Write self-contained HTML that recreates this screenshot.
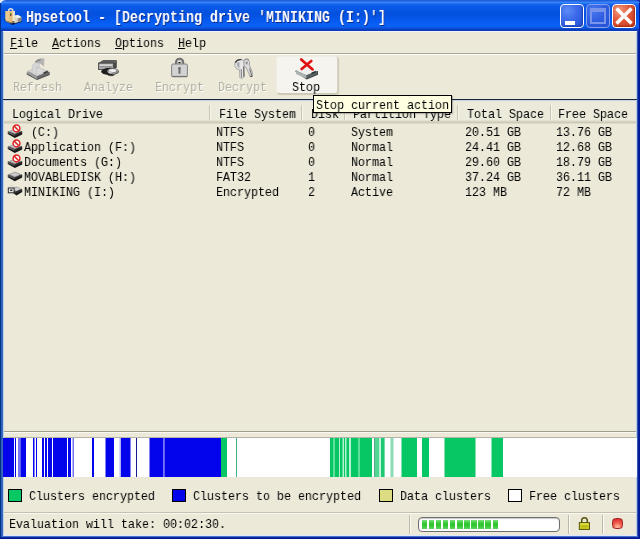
<!DOCTYPE html>
<html>
<head>
<meta charset="utf-8">
<title>Hpsetool</title>
<style>
html,body{margin:0;padding:0;}
body{width:640px;height:539px;overflow:hidden;background:#ece9d8;position:relative;font-family:"Liberation Mono",monospace;}
.abs{position:absolute;}
/* 7px-per-char text imitating 14px SimSun */
.t{position:absolute;font-family:"Liberation Mono",monospace;font-size:13px;line-height:15px;height:15px;white-space:pre;color:#000;transform:scaleX(.8973);transform-origin:0 0;will-change:transform;}
.dis{color:#b2af9f;text-shadow:1px 1px 0 #fff;}
u{text-decoration:underline;text-decoration-thickness:1px;text-underline-offset:1px;}
/* window frame */
#title{left:0;top:0;width:640px;height:31px;border-radius:6px 5px 0 0;
 background:linear-gradient(180deg,#1a58d2 0,#2466e0 1px,#3884fa 2.5px,#1866ee 4px,#0a5ae8 6.5px,#0450de 14px,#065af0 21px,#0a62f6 26px,#0a56e0 28px,#0a40c0 29.5px,#0a38b2 31px);}
#ttext{position:absolute;left:25.5px;top:8px;font-family:"Liberation Mono",monospace;font-weight:bold;font-size:16px;line-height:20px;color:#fff;white-space:pre;transform:scaleX(.8331);transform-origin:0 0;will-change:transform;text-shadow:1px 1px 0 #0a2a8c;}
.bl{background:#0a35c8;}
</style>
</head>
<body>
<!-- corners behind the rounded title bar -->
<div class="abs" style="left:0;top:0;width:320px;height:10px;background:#e4ecfa;"></div><div class="abs" style="left:320px;top:0;width:320px;height:10px;background:#0a30b4;"></div>
<div id="title" class="abs"></div>
<svg class="abs" style="left:0;top:0;" width="30" height="30" viewBox="0 0 30 30">
<path d="M4.3 20.3 L12.3 25 L21.8 21.8 L21.8 19 L4.3 19Z" fill="#061848"/>
<path d="M14 15.8 L18 15 L21.3 17 L21.3 21 L15 23.2 L14 22Z" fill="#d8d4cc"/>
<path d="M14.5 15.8 L18 15 L21.3 17 L17.5 18.2Z" fill="#f4f2ec"/>
<path d="M17.8 18.5 L21.3 17.3 L21.3 21 L17.8 22.2Z" fill="#8a8680"/>
<path d="M8.7 11.5 V10.7 A2 2 0 0 1 12.7 10.7 V11.5" fill="none" stroke="#dcdcdc" stroke-width="1.6"/>
<path d="M5.5 11 H14.5 V20.5 L11 22.5 L5.5 20.5Z" fill="#e3bd7a"/>
<path d="M5.5 11 H9 V21.5 L5.5 20.5Z" fill="#ecca8e"/>
<path d="M12.8 11 H14.8 V20.8 L12.8 21.6Z" fill="#f3ead8"/>
<rect x="10" y="13.4" width="1.5" height="2.6" fill="#6b5a3a"/>
<path d="M6 20.5 L11 22.6 L15 21.2 L15 22.2 L11 23.6 L6 21.5Z" fill="#a89068"/>
</svg>
<div id="ttext">Hpsetool - [Decrypting drive 'MINIKING (I:)']</div>

<!-- caption buttons -->
<div class="abs" style="left:560px;top:4px;width:24px;height:24px;box-sizing:border-box;border:1px solid #fff;border-radius:4px;background:radial-gradient(circle at 30% 25%,#5e8cf5 0,#3a68e8 45%,#2450d2 100%);box-shadow:inset -1px -1px 2px #1a3cb0;"></div>
<div class="abs" style="left:565px;top:21px;width:10px;height:4px;background:#fff;"></div>
<div class="abs" style="left:586px;top:4px;width:24px;height:24px;box-sizing:border-box;border:1px solid #86a2ee;border-radius:4px;background:radial-gradient(circle at 30% 25%,#4a78ee 0,#2f5de0 50%,#2450d2 100%);"></div>
<div class="abs" style="left:590px;top:8px;width:16px;height:16px;box-sizing:border-box;border:2px solid #7893ea;border-top-width:4px;"></div>
<div class="abs" style="left:612px;top:4px;width:24px;height:24px;box-sizing:border-box;border:1px solid #fff;border-radius:4px;background:radial-gradient(circle at 30% 25%,#f09a7c 0,#e0583a 45%,#c63a1c 100%);box-shadow:inset -1px -1px 2px #a02810;"></div>
<svg class="abs" style="left:612px;top:4px;" width="24" height="24" viewBox="0 0 24 24"><path d="M4.500 4.500 L19.500 19.500 M19.500 4.500 L4.500 19.500" stroke="#fff" stroke-width="3.400" stroke-linecap="butt"/></svg>
<!-- frame borders -->
<div class="abs" style="left:0;top:3px;width:1px;height:536px;background:#00318a;"></div>
<div class="abs" style="left:1px;top:31px;width:1px;height:508px;background:#2660b2;"></div>
<div class="abs" style="left:2px;top:31px;width:1px;height:508px;background:#3a69b6;"></div>
<div class="abs" style="left:3px;top:31px;width:1px;height:505px;background:#bcd0ee;"></div>
<div class="abs" style="left:636px;top:31px;width:1px;height:505px;background:#b4caec;"></div>
<div class="abs" style="left:637px;top:31px;width:1px;height:508px;background:#3558b0;"></div>
<div class="abs" style="left:638px;top:31px;width:1px;height:508px;background:#0a2098;"></div>
<div class="abs" style="left:639px;top:3px;width:1px;height:536px;background:#001898;"></div>
<div class="abs" style="left:3px;top:535px;width:634px;height:1px;background:#dde6fa;"></div>
<div class="abs" style="left:2px;top:536px;width:636px;height:1px;background:#4a70d0;"></div>
<div class="abs" style="left:1px;top:537px;width:638px;height:1px;background:#0a2aa0;"></div>
<div class="abs" style="left:0;top:538px;width:640px;height:1px;background:#001890;"></div>
<div class="abs" style="left:3px;top:31px;width:634px;height:1px;background:#f0f3fb;"></div>

<!-- menu bar -->
<div class="t" style="left:10px;top:36px;"><u>F</u>ile</div>
<div class="t" style="left:52px;top:36px;"><u>A</u>ctions</div>
<div class="t" style="left:115px;top:36px;"><u>O</u>ptions</div>
<div class="t" style="left:178px;top:36px;"><u>H</u>elp</div>
<div class="abs" style="left:4px;top:53px;width:632px;height:1px;background:#aca899;"></div>
<div class="abs" style="left:4px;top:54px;width:632px;height:1px;background:#fff;"></div>

<!-- toolbar -->
<div class="abs" style="left:276px;top:56px;width:62px;height:38px;background:#f5f4ef;border:1px solid #eeede6;border-right-color:#d6d3c4;border-bottom-color:#cbc8b8;border-radius:3px;box-sizing:border-box;box-shadow:1px 1px 1px rgba(170,165,140,.45);"></div>
<div class="t dis" style="left:13px;top:80px;">Refresh</div>
<div class="t dis" style="left:84px;top:80px;">Analyze</div>
<div class="t dis" style="left:155px;top:80px;">Encrypt</div>
<div class="t dis" style="left:218px;top:80px;">Decrypt</div>
<div class="t" style="left:292px;top:80px;">Stop</div>
<!-- toolbar icons -->
<svg class="abs" style="left:0;top:55px;" width="340" height="30" viewBox="0 55 340 30">
<!-- Refresh (disabled) -->
<g>
<path d="M26.800 74.600 L37 80 L49.600 75 L49.600 72 L26.800 72Z" fill="#484848"/>
<path d="M27 71 L38 66.800 L49.200 71.400 L37 76.600Z" fill="#c6c6c6"/>
<path d="M29.500 71 L38 68 L46 71.200 L37.200 74.800Z" fill="#dadada"/>
<path d="M27 71 L37 76.600 L37 79.200 L27 73.600Z" fill="#9e9e9e"/>
<path d="M37 76.600 L49.200 71.400 L49.200 74 L37 79.200Z" fill="#6a6a6a"/>
<path d="M43.500 72.200 L47.800 70.400 L47.800 72.200 L43.500 74Z" fill="#3a3a3a"/>
<path d="M32.200 73 L32.200 66.500 Q32.500 63.200 36.300 62.800 L39.500 62.600 L39.500 66.600 L37.200 66.900 Q36.600 67 36.600 67.800 L36.600 73.400 L34.400 74.200Z" fill="#d6d6d6" stroke="#bdbdbd" stroke-width=".5"/>
<path d="M36.500 60 Q41 58 44.300 58.300 L44 66.800 Q41.500 63.500 36.500 62.600Z" fill="#b4b4b4"/>
<path d="M34.800 61.400 Q37.600 59 41 58.600 L40.500 60.700 Q38 61.300 36 63Z" fill="#8e8e8e"/>
</g>
<!-- Analyze -->
<g>
<path d="M98.2 63 L103.2 60 L116.8 60 L113.7 63Z" fill="#5c5c5c"/>
<path d="M113.7 63 L116.8 60 L116.8 67.8 L113.7 69.6Z" fill="#484848"/>
<rect x="98.4" y="63.2" width="15.2" height="6.3" fill="#a9a9a9" stroke="#3c3c3c" stroke-width=".8"/>
<rect x="99.8" y="64.4" width="12.4" height="1.5" fill="#d9d9d9"/>
<rect x="99.8" y="66" width="12.4" height="1" fill="#8d8d8d"/>
<ellipse cx="110" cy="71.5" rx="8.9" ry="3.7" fill="#1e1e1e"/>
<ellipse cx="112.8" cy="71.2" rx="5.6" ry="3" fill="#8e8e8e"/>
<ellipse cx="112.6" cy="70.6" rx="3.6" ry="1.7" fill="#efefef"/>
<ellipse cx="110.2" cy="72.2" rx="1.7" ry="1.2" fill="#c9c9c9"/>
<path d="M107.5 74.8 Q111 76 115 74.6 L114 75.6 Q111 76.6 108.5 75.7Z" fill="#2a2a2a"/>
</g>
<!-- Encrypt (padlock) -->
<g>
<path d="M176 64 V62.2 A3.6 3.3 0 0 1 183.2 62.2 V64" fill="none" stroke="#6f6f6f" stroke-width="2.1"/>
<path d="M177.6 64 V62 A2 2 0 0 1 181.6 62 V64" fill="none" stroke="#b9b9b9" stroke-width=".9"/>
<rect x="178.4" y="62" width="2.2" height="1.5" fill="#1c1c1c"/>
<rect x="171.6" y="64" width="15.8" height="12.8" rx="1.4" fill="#cdcdcd" stroke="#858585" stroke-width="1"/>
<rect x="172.8" y="65.2" width="13.4" height="10.4" fill="#d3d3d3"/>
<path d="M171.8 76.4 H187.4" stroke="#6e6e6e" stroke-width="1"/>
<path d="M179.5 67 a1.4 1.4 0 0 1 1.4 1.4 q0 .8 -.5 1.200 l.1 3.800 q-1 .7 -2 0 l.1 -3.800 q-.5 -.4 -.5 -1.200 a1.400 1.400 0 0 1 1.400 -1.400Z" fill="#6a6a6a"/>
</g>
<!-- Decrypt (keys) -->
<g>
<path d="M235 66.5 Q233.800 61 238.500 59.600 Q243 58.700 244.200 62 Q244.800 65.500 243.600 68 L243.900 77 L241.600 78.600 L239.800 77.600 L239.600 69.800 Q236 69.600 235 66.500Z" fill="#e6e6e6" stroke="#8c8c8c" stroke-width=".7"/>
<path d="M235.300 62.600 Q237 59.200 241.300 59.600" fill="none" stroke="#3e3e3e" stroke-width="1.300"/>
<path d="M236.600 63.500 Q237.800 61.800 239.600 62.600 L239.400 68 L237.600 67.600Z" fill="#a9a9b1"/>
<path d="M241.200 69 L241.500 77.500" stroke="#7d7d7d" stroke-width="1"/><path d="M243.800 66.500 L244 76.800" stroke="#5a5a5a" stroke-width="1.100"/><path d="M244.500 59.800 Q246.500 58.300 248.800 59.600" fill="none" stroke="#666" stroke-width="1"/>
<path d="M244 60.400 Q246.500 58.600 248.600 60 Q250.300 61.800 249.300 64.800 L252.300 72.500 L252.300 76.300 L250.200 76.600 L246.300 67.800 Q244.300 67 243.900 64.500Z" fill="#dcdcdc" stroke="#8a8a8a" stroke-width=".7"/>
<path d="M245.600 62.200 Q246.800 60.900 248 62 L247.200 64.600 L245.800 64.200Z" fill="#8d8d8d"/>
<path d="M249.600 68.500 L251.800 75.800" stroke="#6e6e6e" stroke-width="1"/>
<path d="M250.300 75.600 L252.400 76.200 L252.300 77 L250.300 77Z" fill="#4c4c4c"/>
</g>
<!-- Stop -->
<g>
<path d="M295.600 72 L306.600 79.600 L318 74.800 L318 71 L295.600 70.500Z" fill="#2a3434"/>
<path d="M296 70.800 L306.800 67.300 L317.600 71 L306.600 75.200Z" fill="#f0f0f0"/>
<path d="M296 70.800 L306.600 75.200 L306.600 78.800 L296 74Z" fill="#acb4b4"/>
<path d="M306.600 75.200 L317.600 71 L317.600 74.200 L306.600 78.800Z" fill="#586060"/>
<path d="M311.500 72.400 L315.800 70.800 L315.800 72.600 L311.500 74.200Z" fill="#2a3434"/>
<path d="M301.200 59.400 L312.600 69.400" stroke="#e21111" stroke-width="2.700" stroke-linecap="round"/>
<path d="M311.300 61 L301.600 69" stroke="#e21111" stroke-width="2.700" stroke-linecap="round"/>
</g>
</svg>

<div class="abs" style="left:3px;top:99px;width:634px;height:1px;background:#1c2440;"></div>
<div class="abs" style="left:4px;top:100px;width:632px;height:1px;background:#c9d0e0;"></div>

<!-- list header -->
<div class="abs" style="left:4px;top:101px;width:632px;height:19px;background:#ebeadb;"></div><div class="abs" style="left:4px;top:120px;width:632px;height:1px;background:#e4e1d1;"></div><div class="abs" style="left:4px;top:121px;width:632px;height:1px;background:#d8d4c4;"></div><div class="abs" style="left:4px;top:122px;width:632px;height:1px;background:#cdc9b9;"></div><div class="abs" style="left:4px;top:123px;width:632px;height:1px;background:#dedbcb;"></div>
<div class="abs" style="left:209px;top:105px;width:1px;height:15px;background:#c9c6b4;"></div><div class="abs" style="left:210px;top:105px;width:1px;height:15px;background:#f7f6f0;"></div>
<div class="abs" style="left:301px;top:105px;width:1px;height:15px;background:#c9c6b4;"></div><div class="abs" style="left:302px;top:105px;width:1px;height:15px;background:#f7f6f0;"></div>
<div class="abs" style="left:344px;top:105px;width:1px;height:15px;background:#c9c6b4;"></div><div class="abs" style="left:345px;top:105px;width:1px;height:15px;background:#f7f6f0;"></div>
<div class="abs" style="left:457px;top:105px;width:1px;height:15px;background:#c9c6b4;"></div><div class="abs" style="left:458px;top:105px;width:1px;height:15px;background:#f7f6f0;"></div>
<div class="abs" style="left:550px;top:105px;width:1px;height:15px;background:#c9c6b4;"></div><div class="abs" style="left:551px;top:105px;width:1px;height:15px;background:#f7f6f0;"></div>
<div class="t" style="left:12px;top:107px;">Logical Drive</div>
<div class="t" style="left:219px;top:107px;">File System</div>
<div class="t" style="left:311px;top:107px;">Disk</div>
<div class="t" style="left:353px;top:107px;">Partition Type</div>
<div class="t" style="left:467px;top:107px;">Total Space</div>
<div class="t" style="left:558px;top:107px;">Free Space</div>
<!-- list rows -->
<div class="t" style="left:24px;top:125px;"> (C:)</div>
<div class="t" style="left:216px;top:125px;">NTFS</div>
<div class="t" style="left:308px;top:125px;">0</div>
<div class="t" style="left:351px;top:125px;">System</div>
<div class="t" style="left:465px;top:125px;">20.51 GB</div>
<div class="t" style="left:556px;top:125px;">13.76 GB</div>
<div class="t" style="left:24px;top:140px;">Application (F:)</div>
<div class="t" style="left:216px;top:140px;">NTFS</div>
<div class="t" style="left:308px;top:140px;">0</div>
<div class="t" style="left:351px;top:140px;">Normal</div>
<div class="t" style="left:465px;top:140px;">24.41 GB</div>
<div class="t" style="left:556px;top:140px;">12.68 GB</div>
<div class="t" style="left:24px;top:155px;">Documents (G:)</div>
<div class="t" style="left:216px;top:155px;">NTFS</div>
<div class="t" style="left:308px;top:155px;">0</div>
<div class="t" style="left:351px;top:155px;">Normal</div>
<div class="t" style="left:465px;top:155px;">29.60 GB</div>
<div class="t" style="left:556px;top:155px;">18.79 GB</div>
<div class="t" style="left:24px;top:170px;">MOVABLEDISK (H:)</div>
<div class="t" style="left:216px;top:170px;">FAT32</div>
<div class="t" style="left:308px;top:170px;">1</div>
<div class="t" style="left:351px;top:170px;">Normal</div>
<div class="t" style="left:465px;top:170px;">37.24 GB</div>
<div class="t" style="left:556px;top:170px;">36.11 GB</div>
<div class="t" style="left:24px;top:185px;">MINIKING (I:)</div>
<div class="t" style="left:216px;top:185px;">Encrypted</div>
<div class="t" style="left:308px;top:185px;">2</div>
<div class="t" style="left:351px;top:185px;">Active</div>
<div class="t" style="left:465px;top:185px;">123 MB</div>
<div class="t" style="left:556px;top:185px;">72 MB</div>
<!-- row icons -->
<svg class="abs" style="left:0;top:122px;" width="30" height="80" viewBox="0 122 30 80">
<path d="M7.800 134.0 L14.800 138.0 L22.200 134.4 L22.200 131.6 L7.800 131.6 Z" fill="#151515"/><path d="M8 131.4 L15.200 128.6 L22 131.2 L14.800 134.2 Z" fill="#9c9c9c"/><path d="M10.500 131.3 L15.200 129.5 L19.500 131.2 L14.900 133.1 Z" fill="#cdcdcd"/><path d="M8 131.4 L14.800 134.2 L14.800 136.0 L8 133.2 Z" fill="#585858"/><path d="M14.800 134.2 L22 131.2 L22 133.0 L14.800 136.0 Z" fill="#2e2e2e"/>
<circle cx="16.5" cy="128.4" r="3.400" fill="#fff" stroke="#e02424" stroke-width="1.500"/><path d="M14.2 126.1 L18.8 130.7" stroke="#e02424" stroke-width="1.500"/>
<path d="M7.800 149.0 L14.800 153.0 L22.200 149.4 L22.200 146.6 L7.800 146.6 Z" fill="#151515"/><path d="M8 146.4 L15.200 143.6 L22 146.2 L14.800 149.2 Z" fill="#9c9c9c"/><path d="M10.500 146.3 L15.200 144.5 L19.500 146.2 L14.900 148.1 Z" fill="#cdcdcd"/><path d="M8 146.4 L14.800 149.2 L14.800 151.0 L8 148.2 Z" fill="#585858"/><path d="M14.800 149.2 L22 146.2 L22 148.0 L14.800 151.0 Z" fill="#2e2e2e"/>
<circle cx="16.5" cy="143.4" r="3.400" fill="#fff" stroke="#e02424" stroke-width="1.500"/><path d="M14.2 141.1 L18.8 145.7" stroke="#e02424" stroke-width="1.500"/>
<path d="M7.800 164.0 L14.800 168.0 L22.200 164.4 L22.200 161.6 L7.800 161.6 Z" fill="#151515"/><path d="M8 161.4 L15.200 158.6 L22 161.2 L14.800 164.2 Z" fill="#9c9c9c"/><path d="M10.500 161.3 L15.200 159.5 L19.500 161.2 L14.900 163.1 Z" fill="#cdcdcd"/><path d="M8 161.4 L14.800 164.2 L14.800 166.0 L8 163.2 Z" fill="#585858"/><path d="M14.800 164.2 L22 161.2 L22 163.0 L14.800 166.0 Z" fill="#2e2e2e"/>
<circle cx="16.5" cy="158.4" r="3.400" fill="#fff" stroke="#e02424" stroke-width="1.500"/><path d="M14.2 156.1 L18.8 160.7" stroke="#e02424" stroke-width="1.500"/>
<path d="M7.800 177.2 L14.800 181.2 L22.200 177.6 L22.200 174.8 L7.800 174.8 Z" fill="#151515"/><path d="M8 174.6 L15.200 171.8 L22 174.4 L14.800 177.4 Z" fill="#9c9c9c"/><path d="M10.500 174.5 L15.200 172.7 L19.500 174.4 L14.900 176.3 Z" fill="#cdcdcd"/><path d="M8 174.6 L14.800 177.4 L14.800 179.2 L8 176.4 Z" fill="#585858"/><path d="M14.800 177.4 L22 174.4 L22 176.2 L14.800 179.2 Z" fill="#2e2e2e"/>
<path d="M11.500 191.8 L16.500 195.4 L22.200 192.0 L22.200 189.4 L11.500 189.4 Z" fill="#151515"/>
<path d="M11 189.0 L16.500 186.6 L22 189.0 L16 192.0 Z" fill="#a6a6a6"/>
<path d="M14 192.0 L22 189.0 L22 191.0 L15 194.0 Z" fill="#2e2e2e"/>
<path d="M13.500 189.0 L17 187.5 L20 189.0 L16.500 190.8 Z" fill="#d4d4d4"/>
<path d="M9.700 188.200 V186.900 A1.600 1.600 0 0 1 12.900 186.900 V188.200" fill="none" stroke="#dadada" stroke-width="1.300"/>
<rect x="8.300" y="188" width="5.800" height="4.800" fill="#e4e4e4" stroke="#2a2a2a" stroke-width="1"/>
<rect x="10.300" y="189.500" width="2" height="1.500" fill="#1c1c1c"/>
</svg>
<div class="abs" style="left:4px;top:431px;width:632px;height:1px;background:#9d9d92;"></div>
<div class="abs" style="left:4px;top:432px;width:632px;height:1px;background:#f8f7f2;"></div>

<!-- cluster map -->
<div class="abs" style="left:4px;top:437px;width:632px;height:1px;background:#b4b4a8;"></div>
<svg class="abs" style="left:0;top:438px;" width="640" height="39" viewBox="0 0 640 39"><rect x="4" y="0" width="633" height="39" fill="#fff"/>
<rect x="3" y="0" width="11" height="39" fill="#0404ec"/>
<rect x="15" y="0" width="1" height="39" fill="#0404ec"/>
<rect x="18" y="0" width="2.5" height="39" fill="#7474f6"/>
<rect x="20.5" y="0" width="5.5" height="39" fill="#0404ec"/>
<rect x="33" y="0" width="1.5" height="39" fill="#0404ec"/>
<rect x="36" y="0" width="1" height="39" fill="#0404ec"/>
<rect x="42" y="0" width="2" height="39" fill="#0404ec"/>
<rect x="45" y="0" width="2" height="39" fill="#0404ec"/>
<rect x="48" y="0" width="4" height="39" fill="#0404ec"/>
<rect x="53" y="0" width="14" height="39" fill="#0404ec"/>
<rect x="68" y="0" width="3" height="39" fill="#0404ec"/>
<rect x="72.5" y="0" width="1.5" height="39" fill="#7474f6"/>
<rect x="92" y="0" width="2" height="39" fill="#0404ec"/>
<rect x="105.5" y="0" width="8.5" height="39" fill="#0404ec"/>
<rect x="119.5" y="0" width="1.5" height="39" fill="#b0b0fa"/>
<rect x="121" y="0" width="9.5" height="39" fill="#0404ec"/>
<rect x="136" y="0" width="1" height="39" fill="#1a1a90"/>
<rect x="149.5" y="0" width="13.5" height="39" fill="#0404ec"/>
<rect x="163" y="0" width="1.5" height="39" fill="#7474f6"/>
<rect x="164.5" y="0" width="56.5" height="39" fill="#0404ec"/>
<rect x="221" y="0" width="6" height="39" fill="#06c764"/>
<rect x="236" y="0" width="1" height="39" fill="#3cb482"/>
<rect x="330" y="0" width="42" height="39" fill="#b6f2d2"/>
<rect x="330" y="0" width="3.5" height="39" fill="#06c764"/>
<rect x="334.5" y="0" width="4.5" height="39" fill="#06c764"/>
<rect x="340" y="0" width="2.5" height="39" fill="#06c764"/>
<rect x="344" y="0" width="1" height="39" fill="#06c764"/>
<rect x="346.5" y="0" width="2.5" height="39" fill="#06c764"/>
<rect x="351" y="0" width="7.5" height="39" fill="#06c764"/>
<rect x="359.5" y="0" width="12.5" height="39" fill="#06c764"/>
<rect x="374" y="0" width="1" height="39" fill="#58a884"/>
<rect x="375" y="0" width="4.5" height="39" fill="#52d694"/>
<rect x="380.8" y="0" width="3.8" height="39" fill="#1cc870"/>
<rect x="379.5" y="0" width="1" height="39" fill="#c4f4dc"/>
<rect x="390.5" y="0" width="3" height="39" fill="#8adcb4"/>
<rect x="401.5" y="0" width="15.5" height="39" fill="#06c764"/>
<rect x="422" y="0" width="7" height="39" fill="#06c764"/>
<rect x="444.5" y="0" width="31" height="39" fill="#06c764"/>
<rect x="491.5" y="0" width="11.5" height="39" fill="#06c764"/>
</svg>

<!-- legend -->
<div class="abs" style="left:8px;top:489px;width:14px;height:13px;box-sizing:border-box;border:1px solid #000;background:#08c864;"></div>
<div class="t" style="left:29px;top:489px;">Clusters encrypted</div>
<div class="abs" style="left:172px;top:489px;width:14px;height:13px;box-sizing:border-box;border:1px solid #000;background:#0404ec;"></div>
<div class="t" style="left:193px;top:489px;">Clusters to be encrypted</div>
<div class="abs" style="left:379px;top:489px;width:14px;height:13px;box-sizing:border-box;border:1px solid #000;background:#dcdc82;"></div>
<div class="t" style="left:400px;top:489px;">Data clusters</div>
<div class="abs" style="left:508px;top:489px;width:14px;height:13px;box-sizing:border-box;border:1px solid #000;background:#ffffff;"></div>
<div class="t" style="left:529px;top:489px;">Free clusters</div>

<!-- status bar -->
<div class="abs" style="left:4px;top:512px;width:632px;height:1px;background:#c4c1b0;"></div>
<div class="abs" style="left:4px;top:513px;width:632px;height:1px;background:#f8f7f2;"></div>
<div class="t" style="left:9px;top:517px;">Evaluation will take: 00:02:30.</div>
<div class="abs" style="left:409px;top:515px;width:1px;height:19px;background:#bcb9a8;"></div><div class="abs" style="left:410px;top:515px;width:1px;height:19px;background:#fbfaf6;"></div>
<div class="abs" style="left:568px;top:515px;width:1px;height:19px;background:#bcb9a8;"></div><div class="abs" style="left:569px;top:515px;width:1px;height:19px;background:#fbfaf6;"></div>
<div class="abs" style="left:602px;top:515px;width:1px;height:19px;background:#bcb9a8;"></div><div class="abs" style="left:603px;top:515px;width:1px;height:19px;background:#fbfaf6;"></div>
<div class="abs" style="left:418px;top:517px;width:142px;height:15px;box-sizing:border-box;border:1px solid #6e6e6e;border-radius:4px;background:#fff;box-shadow:inset 0 1px 1px #c8c8c8;"></div>
<div class="abs" style="left:422.00px;top:520px;width:5.3px;height:9px;background:linear-gradient(180deg,#7fe07f 0,#3fcc3f 30%,#2dc42d 55%,#5cd65c 100%);"></div>
<div class="abs" style="left:429.05px;top:520px;width:5.3px;height:9px;background:linear-gradient(180deg,#7fe07f 0,#3fcc3f 30%,#2dc42d 55%,#5cd65c 100%);"></div>
<div class="abs" style="left:436.10px;top:520px;width:5.3px;height:9px;background:linear-gradient(180deg,#7fe07f 0,#3fcc3f 30%,#2dc42d 55%,#5cd65c 100%);"></div>
<div class="abs" style="left:443.15px;top:520px;width:5.3px;height:9px;background:linear-gradient(180deg,#7fe07f 0,#3fcc3f 30%,#2dc42d 55%,#5cd65c 100%);"></div>
<div class="abs" style="left:450.20px;top:520px;width:5.3px;height:9px;background:linear-gradient(180deg,#7fe07f 0,#3fcc3f 30%,#2dc42d 55%,#5cd65c 100%);"></div>
<div class="abs" style="left:457.25px;top:520px;width:5.3px;height:9px;background:linear-gradient(180deg,#7fe07f 0,#3fcc3f 30%,#2dc42d 55%,#5cd65c 100%);"></div>
<div class="abs" style="left:464.30px;top:520px;width:5.3px;height:9px;background:linear-gradient(180deg,#7fe07f 0,#3fcc3f 30%,#2dc42d 55%,#5cd65c 100%);"></div>
<div class="abs" style="left:471.35px;top:520px;width:5.3px;height:9px;background:linear-gradient(180deg,#7fe07f 0,#3fcc3f 30%,#2dc42d 55%,#5cd65c 100%);"></div>
<div class="abs" style="left:478.40px;top:520px;width:5.3px;height:9px;background:linear-gradient(180deg,#7fe07f 0,#3fcc3f 30%,#2dc42d 55%,#5cd65c 100%);"></div>
<div class="abs" style="left:485.45px;top:520px;width:5.3px;height:9px;background:linear-gradient(180deg,#7fe07f 0,#3fcc3f 30%,#2dc42d 55%,#5cd65c 100%);"></div>
<div class="abs" style="left:492.50px;top:520px;width:5.3px;height:9px;background:linear-gradient(180deg,#7fe07f 0,#3fcc3f 30%,#2dc42d 55%,#5cd65c 100%);"></div>
<!-- status icons -->
<div class="abs" style="left:612px;top:518px;width:11px;height:11px;box-sizing:border-box;border:1px solid #a02626;border-radius:3.500px;background:radial-gradient(circle at 50% 88%,#ffc4a0 0,#f06050 45%,#d42424 100%);"></div>
<svg class="abs" style="left:570px;top:514px;" width="64" height="20" viewBox="570 514 64 20">
<path d="M581.700 523 V520.600 A2.800 2.900 0 0 1 587.300 520.600 V523" fill="none" stroke="#55550c" stroke-width="1.500"/>
<rect x="579.300" y="522.600" width="10.200" height="6.800" fill="#c9c91f" stroke="#4a4a08" stroke-width=".9"/>
<rect x="580.300" y="523.400" width="8.200" height="1.600" fill="#dede48"/>
<rect x="581.600" y="525.600" width="5.600" height="1.400" fill="#b2b212"/>
</svg>


<!-- tooltip -->
<div class="abs" style="left:313px;top:95px;width:139px;height:18px;box-sizing:border-box;background:#ffffe1;border:1px solid #000;box-shadow:1px 1px 1px rgba(60,60,50,.3);"></div>
<div class="t" style="left:315.5px;top:98px;">Stop current action</div>

</body>
</html>
